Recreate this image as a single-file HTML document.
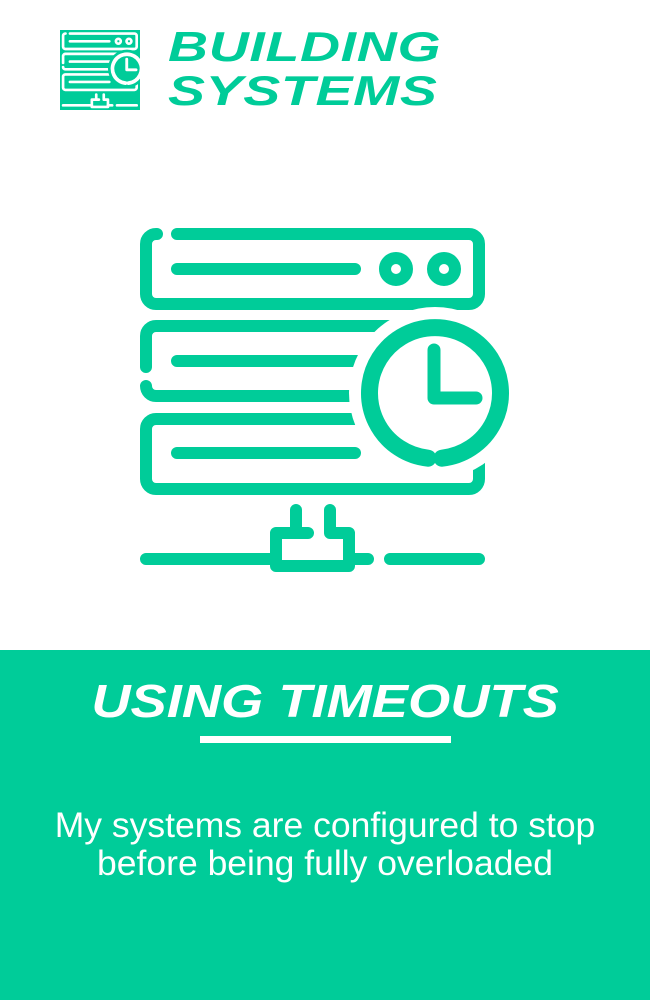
<!DOCTYPE html>
<html><head><meta charset="utf-8"><style>
html,body{margin:0;padding:0;}
body{width:650px;height:1000px;position:relative;background:#fff;overflow:hidden;font-family:"Liberation Sans",sans-serif;}
.logo{position:absolute;left:60px;top:30px;width:80px;height:80px;background:#00cc99;}
.brand{position:absolute;left:168px;color:#00cc99;font-weight:bold;font-style:italic;font-size:42px;line-height:42px;transform-origin:0 0;transform:scaleX(1.32);letter-spacing:0.5px;}
.band{position:absolute;left:0;top:650px;width:650px;height:350px;background:#00cc99;color:#fff;}
.title{position:absolute;left:0;width:650px;top:26px;text-align:center;font-weight:bold;font-style:italic;font-size:46px;line-height:50px;}
.title span{display:inline-block;transform:scaleX(1.18);}
.bar{position:absolute;left:200px;top:86px;width:251px;height:7px;background:#fff;}
.body{position:absolute;left:0;width:650px;top:156px;text-align:center;font-size:35.5px;line-height:38px;}
</style></head><body>
<svg width="0" height="0" style="position:absolute">
<defs>
<g id="ic" fill="none" stroke-linecap="round" stroke-linejoin="round">
<path d="M157 234 H156 A10 10 0 0 0 146 244 V294 A10 10 0 0 0 156 304 H469 A10 10 0 0 0 479 294 V244 A10 10 0 0 0 469 234 H177" stroke-width="12"/>
<path d="M177 269 H355" stroke-width="12"/>
<circle cx="396" cy="269" r="11" stroke-width="12"/>
<circle cx="444" cy="269" r="11" stroke-width="12"/>
<path d="M146 367 V336 A10 10 0 0 1 156 326 H420 M177 361 H420 M146 386 A10 10 0 0 0 156 396 H420" stroke-width="12"/>
<path d="M420 419 H156 A10 10 0 0 0 146 429 V479 A10 10 0 0 0 156 489 H469 A10 10 0 0 0 479 479 V440" stroke-width="12"/>
<path d="M177 453 H355" stroke-width="12"/>
<circle cx="435" cy="393" r="86" stroke="none" style="fill:var(--bg)"/>
<path d="M428 458.2 A65.5 65.5 0 1 1 442 458.2" stroke-width="17" stroke-linecap="round"/>
<path d="M434 350 V398 H476" stroke-width="13"/>
<path d="M146 559 H276 M349 559 H368 M390 559 H479" stroke-width="12"/>
<path d="M296 510 V533 H276 V566 H349 V533 H330 V510 M296 533 H308" stroke-width="12"/>
</g>
</defs>
</svg>
<div class="logo"><svg width="80" height="80" viewBox="132 218 362 362" style="--bg:#00cc99"><use href="#ic" stroke="#fff"/></svg></div>
<div class="brand" style="top:26px">BUILDING</div>
<div class="brand" style="top:70px">SYSTEMS</div>
<svg style="position:absolute;left:0;top:0;--bg:#fff" width="650" height="650"><use href="#ic" stroke="#00cc99"/></svg>
<div class="band">
<div class="title"><span>USING TIMEOUTS</span></div>
<div class="bar"></div>
<div class="body">My systems are configured to stop<br>before being fully overloaded</div>
</div>
</body></html>
